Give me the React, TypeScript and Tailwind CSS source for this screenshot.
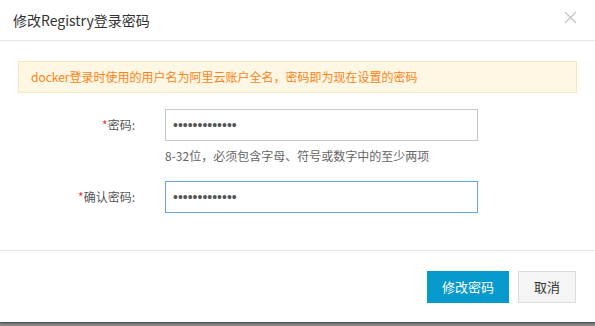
import React from 'react';

const font = { fontFamily: '"Noto Sans CJK SC", "Liberation Sans", sans-serif' };

function Field({ label, focused }: { label: string; focused?: boolean }) {
  return (
    <div className="flex items-center">
      <label className="w-[147px] shrink-0 pr-[30px] text-right text-[12px] text-[#555]">
        <span className="text-[#e4393c]">*</span>
        {label}:
      </label>
      <div
        className={
          focused
            ? 'flex h-[32px] w-[313px] items-center border border-[#66a6e0] px-[7px]'
            : 'flex h-[32px] w-[313px] items-center border border-[#c8c8c8] px-[7px]'
        }
      >
        <span className="font-['Liberation_Sans'] text-[14px] leading-none text-[#555]">•••••••••••••</span>
      </div>
    </div>
  );
}

export default function App() {
  return (
    <div className="h-[326px] w-[595px] bg-[#8a8a8a]" style={font}>
      <div className="flex h-[322px] flex-col bg-white shadow-[0_1px_2px_rgba(0,0,0,0.6)]">
        {/* Header */}
        <div className="flex h-[41px] shrink-0 items-center justify-between border-b border-[#e5e5e5] pl-[13px] pr-[18px]">
          <h3 className="text-[14px] text-[#333]">修改Registry登录密码</h3>
          <svg width="13" height="13" viewBox="0 0 13 13" className="-mt-[6px]">
            <path d="M1 1L12 12M12 1L1 12" stroke="#c4c4c4" strokeWidth="1.3" />
          </svg>
        </div>

        {/* Body */}
        <div className="flex-1 px-[18px] pt-[20px]">
          <div className="flex h-[32px] items-center border border-[#fae5bf] bg-[#fdf7e4] px-[12px] text-[12px] text-[#ff8418]">
            docker登录时使用的用户名为阿里云账户全名，密码即为现在设置的密码
          </div>

          <div className="mt-[16px]">
            <Field label="密码" />
            <p className="mt-[6px] pl-[147px] text-[12px] text-[#666]">
              8-32位，必须包含字母、符号或数字中的至少两项
            </p>
          </div>

          <div className="mt-[16px]">
            <Field label="确认密码" focused />
          </div>
        </div>

        {/* Footer */}
        <div className="flex h-[72px] shrink-0 items-center justify-end gap-[9px] border-t border-[#e5e5e5] pr-[19px]">
          <button className="h-[32px] w-[82px] bg-[#0699cc] text-[13px] text-white">修改密码</button>
          <button className="h-[32px] w-[58px] border border-[#dcdcdc] bg-[#f5f5f5] text-[13px] text-[#333]">
            取消
          </button>
        </div>
      </div>
    </div>
  );
}
